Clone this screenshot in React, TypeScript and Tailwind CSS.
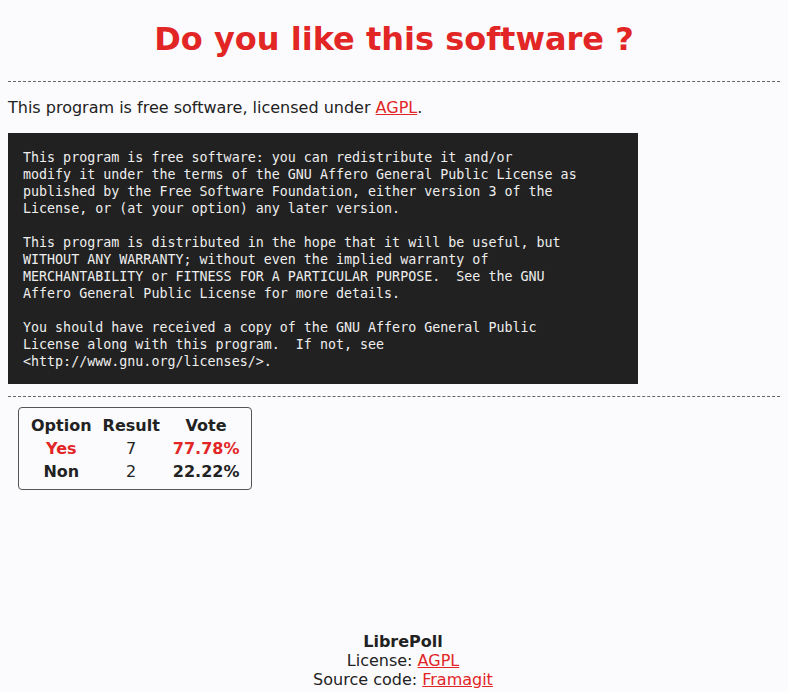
import React from 'react';

const LICENSE_TEXT = `This program is free software: you can redistribute it and/or
modify it under the terms of the GNU Affero General Public License as
published by the Free Software Foundation, either version 3 of the
License, or (at your option) any later version.

This program is distributed in the hope that it will be useful, but
WITHOUT ANY WARRANTY; without even the implied warranty of
MERCHANTABILITY or FITNESS FOR A PARTICULAR PURPOSE.  See the GNU
Affero General Public License for more details.

You should have received a copy of the GNU Affero General Public
License along with this program.  If not, see
<http://www.gnu.org/licenses/>.`;

const results = [
  { option: 'Yes', count: 7, percent: '77.78%', winner: true },
  { option: 'Non', count: 2, percent: '22.22%', winner: false },
];

export default function App() {
  return (
    <div className="min-h-screen flex flex-col bg-[#fbfbfd] text-[#222] text-[16px] font-['DejaVu_Sans',sans-serif] px-2">
      <main>
        <h1 className="text-center text-[32px] font-bold text-[#e22626] mt-[21px] mb-[23px] leading-[37px]">
          Do you like this software ?
        </h1>
        <hr className="border-0 border-t border-dashed border-[#666]" />
        <p className="my-4 leading-[19px]">
          This program is free software, licensed under{' '}
          <a href="#" className="text-[#e22626] underline">
            AGPL
          </a>
          .
        </p>
        <pre className="w-[630px] bg-[#212121] text-[#eee] px-[15px] pt-[16px] pb-[14px] text-[13.333px] leading-[17px] font-['DejaVu_Sans_Mono',monospace] whitespace-pre">
          {LICENSE_TEXT}
        </pre>
        <hr className="border-0 border-t border-dashed border-[#666] mt-3" />
        <div className="inline-block ml-[10px] mt-[10px] border border-[#555] rounded-[4px] px-[7px] py-[6px]">
          <table className="border-separate border-spacing-0">
            <thead>
              <tr className="font-bold">
                <th className="px-[5px] py-[2px] leading-[19px]">Option</th>
                <th className="px-[6px] py-[2px] leading-[19px]">Result</th>
                <th className="pl-[7px] pr-[5px] py-[2px] leading-[19px]">Vote</th>
              </tr>
            </thead>
            <tbody>
              {results.map((r) => (
                <tr key={r.option}>
                  <td className={`px-[5px] py-[2px] leading-[19px] text-center font-bold ${r.winner ? 'text-[#e22626]' : ''}`}>
                    {r.option}
                  </td>
                  <td className="px-[6px] py-[2px] leading-[19px] text-center">{r.count}</td>
                  <td className={`pl-[7px] pr-[5px] py-[2px] leading-[19px] text-center font-bold ${r.winner ? 'text-[#e22626]' : ''}`}>
                    {r.percent}
                  </td>
                </tr>
              ))}
            </tbody>
          </table>
        </div>
      </main>
      <footer className="mt-auto pl-[18px] pb-[3px] text-center leading-[19px]">
        <div className="font-bold">LibrePoll</div>
        <div>
          License:{' '}
          <a href="#" className="text-[#e22626] underline">
            AGPL
          </a>
        </div>
        <div>
          Source code:{' '}
          <a href="#" className="text-[#e22626] underline">
            Framagit
          </a>
        </div>
      </footer>
    </div>
  );
}
